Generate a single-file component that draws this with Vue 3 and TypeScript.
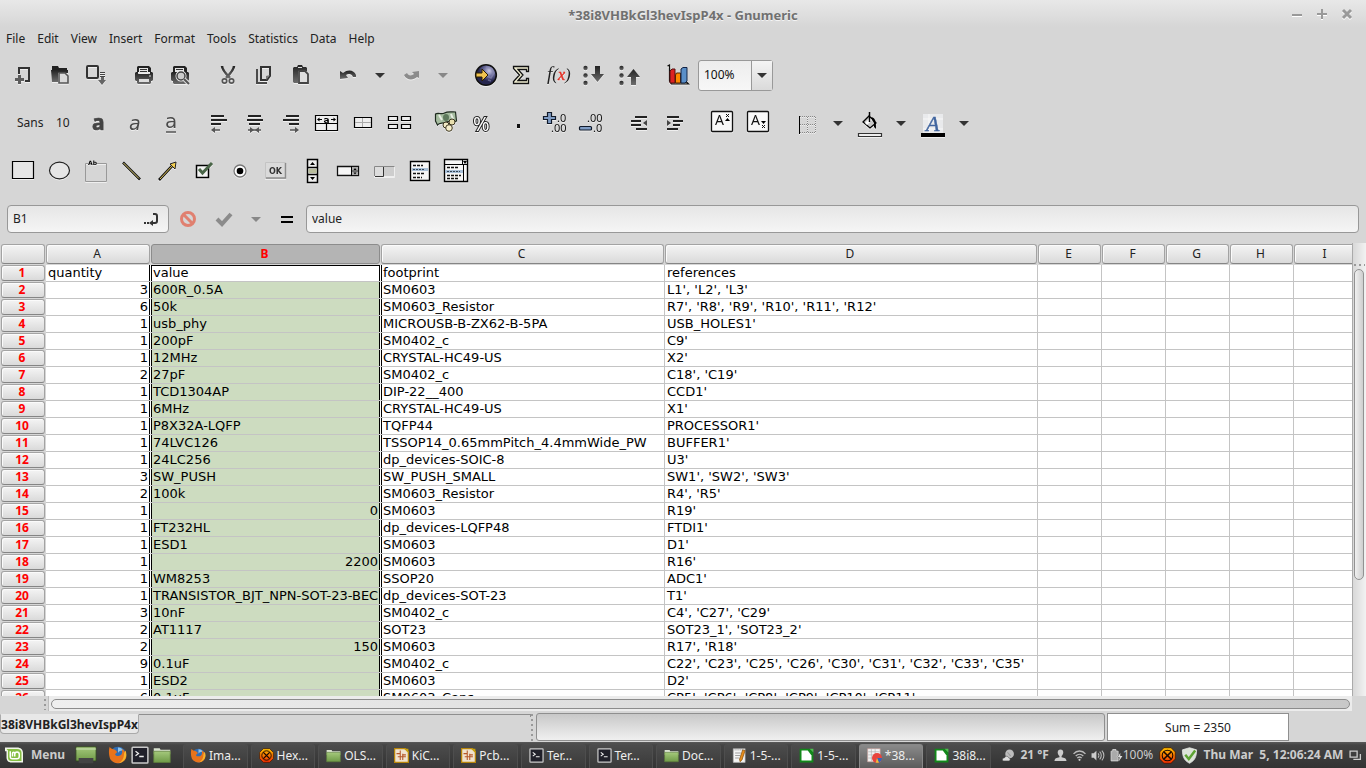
<script setup lang="ts">
import { ref } from 'vue'

interface Tool {
  icon?: string
  label?: string
  kind?: 'sep' | 'arrow'
  faded?: boolean
}
type Row = [string, string, string, string]

const D = 'url(#ink)'
const sep: Tool = { kind: 'sep' }
const arrow = (label: string, faded = false): Tool => ({ kind: 'arrow', label, faded })

const icons: Record<string, string> = {
  new: `<path d="M7 11V5h10v13h-4" fill="none" stroke="#333" stroke-width="2"/><path d="M6 12h3v3h3v3H9v3H6v-3H3v-3h3z" fill="#5c5c5c"/>`,
  open: `<path d="M4 3h6l1 2h8v2H4z" fill="#222"/><path d="M3 7h17v3H10v9H4z" fill="${D}"/><path d="M11 10h6l3 3v7h-9z" fill="#d9d9d9" stroke="#555" stroke-width="1.6"/>`,
  save: `<rect x="3" y="3" width="11" height="12" rx="1" fill="none" stroke="#333" stroke-width="2"/><path d="M16 9.500h5M16 11.500h5M16 13.500h5" stroke="#444"/><path d="M17 14h3v3h2l-4 5-4-5h3z" fill="#666"/>`,
  print: `<path d="M5 9V4l1-1h11l2 2v4z" fill="#222"/><path d="M7 5h9v5H7z" fill="#e4e4e4"/><path d="M8 6.500h7M8 8.500h7" stroke="#333"/><path d="M3 10l1-1h2v2h12V9h2l1 1v7l-1 1h-1v2l-1 1H6l-1-1v-2H4l-1-1z" fill="${D}"/><path d="M7 16h10v3H7z" fill="#ddd"/><path d="M17 13h2" stroke="#ddd"/>`,
  preview: `<path d="M5 9V4l1-1h11l2 2v4z" fill="#222"/><path d="M7 5h9v4H7z" fill="#e4e4e4"/><path d="M8 6.500h7" stroke="#333"/><path d="M3 10l1-1h16l1 1v7l-1 1h-1v2l-1 1H6l-1-1v-2H4l-1-1z" fill="${D}"/><circle cx="13" cy="13" r="4" fill="#ccc" stroke="#eee" stroke-width="3"/><circle cx="13" cy="13" r="4" fill="#ccc" stroke="#444" stroke-width="1.500"/><path d="M16 16l4 4" stroke="#ddd" stroke-width="4"/><path d="M16 16l5 5" stroke="#555" stroke-width="2"/>`,
  cut: `<path d="M6 3c0 4 4 8 8 12M18 3c0 4-4 8-8 12" fill="none" stroke="${D}" stroke-width="2.500"/><circle cx="8.500" cy="18" r="2.200" fill="none" stroke="#555" stroke-width="1.700"/><circle cx="15.500" cy="18" r="2.200" fill="none" stroke="#555" stroke-width="1.700"/>`,
  copy: `<path d="M5 6v14h10" fill="none" stroke="#4a4a4a" stroke-width="2"/><path d="M9 4h9v9l-3 4H9z" fill="none" stroke="#333" stroke-width="2"/><path d="M18 12l-4 5v-4z" fill="#777"/>`,
  paste: `<path d="M5 5l1-1h3l1-2h4l1 2h3l1 1v3h-9v12H6l-1-1z" fill="${D}"/><path d="M11 8h6l3 3v9h-9z" fill="#ddd" stroke="#444" stroke-width="1.800"/><path d="M10 4h4v1h-4z" fill="#ddd"/>`,
  undo: `<path d="M4 16V8l3 2c5-4 11-3 13 2v2h-3c-1-3-4-4-7-2l2 3z" fill="${D}"/>`,
  redo: `<path d="M20 8v7l-2-1c-4 4-11 3-13-2l3-2c1 3 5 3 7 1l-2-2z" fill="#8c8c8c"/>`,
  globe: `<circle cx="12" cy="12" r="10.300" fill="url(#globe)" stroke="#111" stroke-width="1.600"/><path d="M12 4l5 1 3 5-3 5-4-2M14 17l3 1" fill="none" stroke="#8b8bb0" stroke-width="1.500" opacity=".6"/><path d="M2 10h6V6l6 6-6 6v-4H2z" fill="#f0c350" stroke="#2d2000"/>`,
  sum: `<path d="M3.500 3.500h15v5h-2V6.500H8l5 5.500-5 5.500h8.500V15.500h2v5h-15v-2L9.500 12l-6-6.500z" fill="#f4f2d6" stroke="#111" stroke-width="1.300"/>`,
  func: `<text x="1" y="17" font-family="Liberation Serif, serif" font-style="italic" font-size="19" fill="#222">f<tspan font-size="17">(</tspan><tspan fill="#e22d22" stroke="#e22d22" stroke-width=".4" font-size="16">x</tspan><tspan font-size="17">)</tspan></text>`,
  sortasc: `<g fill="${D}"><circle cx="3.500" cy="5" r="2.200"/><circle cx="3.500" cy="12.500" r="2.200"/><circle cx="3.500" cy="20" r="2.200"/><path d="M13 3h5v8h4l-6.500 8L9 11h4z"/></g>`,
  sortdesc: `<g fill="${D}"><circle cx="3.500" cy="5" r="2.200"/><circle cx="3.500" cy="12.500" r="2.200"/><circle cx="3.500" cy="20" r="2.200"/><path d="M13 22h5v-8h4l-6.500-8L9 14h4z"/></g>`,
  chart: `<path d="M1.500 3l2-1v16l2 3h17l-3-3" fill="#bba" stroke="#111" stroke-width="1.200"/><path d="M4 8l2-2h3v14H4z" fill="#d22" stroke="#511"/><path d="M9.500 12l1-2h4v10h-5z" fill="#f80" stroke="#520"/><path d="M15 6l2-1.500h4V18l-2 2h-4z" fill="#5a8fc8" stroke="#124"/>`,
  bold: `<text x="6" y="19" font-family="Noto Sans, sans-serif" font-weight="700" font-size="21" fill="#444" stroke="#444" stroke-width=".7">a</text>`,
  italic: `<text x="7" y="19" font-family="DejaVu Sans, sans-serif" font-style="italic" font-size="19" fill="#4a4a4a">a</text>`,
  under: `<text x="7" y="17" font-family="DejaVu Sans, sans-serif" font-size="20" fill="#4a4a4a">a</text><path d="M8 21h10" stroke="#555" stroke-width="1.500"/>`,
  left: `<path d="M5 5h13M5 9h16M5 13h10" stroke="#222" stroke-width="2"/><path d="M7 19h7" stroke="#555" stroke-width="1.500"/><path d="M5 19l4-3v6z" fill="#555"/>`,
  center: `<path d="M6 5h13M5 9h16M7 13h11" stroke="#222" stroke-width="2"/><path d="M6 19h13" stroke="#555" stroke-width="1.500"/><path d="M12 19l-4-3v6zM13 19l4-3v6z" fill="#555"/>`,
  right: `<path d="M8 5h13M5 9h16M11 13h10" stroke="#222" stroke-width="2"/><path d="M12 19h7" stroke="#555" stroke-width="1.500"/><path d="M21 19l-4-3v6z" fill="#555"/>`,
  merge: `<path d="M1.500 4.500h22v15h-22zM1.500 12.500h22M12.500 12.500v7" fill="#efefef" stroke="#000" stroke-width="1.200"/><text x="9.500" y="11.500" font-family="DejaVu Sans, sans-serif" font-weight="700" font-size="9">a</text><path d="M4 8.500h4M17 8.500h4" stroke="#000"/><path d="M3 8.500l2.500-2v4zM22 8.500l-2.500-2v4z"/>`,
  split: `<path d="M4.500 6.500h17v10h-17z" fill="#eee" stroke="#000" stroke-width="1.200"/><path d="M12.500 7v9M5 11.500h16" stroke="#aaa"/>`,
  cells: `<path d="M2.500 5.500h9v4h-9zM15.500 5.500h9v4h-9zM2.500 13.500h9v4h-9zM15.500 13.500h9v4h-9z" fill="#eee" stroke="#000" stroke-width="1.200"/>`,
  money: `<path d="M1.500 3c3-2 6 1 9-1s8-1 11-1l1 9c-3 2-6-1-10 1s-7 0-9 3l-2-4z" fill="#a6bda0" stroke="#1f2b1f" stroke-width="1.200"/><path d="M5 4l3 5M17 3l2 5" stroke="#e8eee4" stroke-width="2"/><ellipse cx="12" cy="6.500" rx="3" ry="3.500" fill="#5f7a5d"/><circle cx="18" cy="11" r="3" fill="#e8dfae" stroke="#3b3520"/><circle cx="12" cy="14" r="3" fill="#f2ebc6" stroke="#3b3520"/><circle cx="15" cy="17" r="3.300" fill="#f6eecb" stroke="#3b3520"/>`,
  percent: `<text x="3" y="20" font-family="Noto Sans, sans-serif" font-size="20" fill="#fff" stroke="#222" stroke-width="2" paint-order="stroke">%</text>`,
  dot: `<path d="M11 13h3v4h-3z" fill="#111"/>`,
  decmore: `<path d="M5.500 1.500h4v4h4v3h-4v4h-4v-4h-4v-3h4z" fill="#7f9cc4" stroke="#111a2a" stroke-width="1.200"/><text font-family="Noto Sans, sans-serif" font-size="11" fill="#111"><tspan x="15" y="11">.0</tspan><tspan x="9" y="21">.00</tspan></text>`,
  decless: `<rect x="1.500" y="15.500" width="12" height="3.500" rx="1" fill="#7f9cc4" stroke="#111a2a" stroke-width="1.200"/><text font-family="Noto Sans, sans-serif" font-size="11" fill="#111"><tspan x="9" y="11">.00</tspan><tspan x="15" y="21">.0</tspan></text>`,
  outdent: `<path d="M9 6h12M5 10h10M5 14h10M10 18h11" stroke="#222" stroke-width="2"/><path d="M17 12l4-3v6z" fill="#444"/>`,
  indent: `<path d="M5 6h12M11 10h10M11 14h7M5 18h11" stroke="#222" stroke-width="2"/><path d="M9 12L5 9v6z" fill="#444"/>`,
  sup: `<rect x="1.500" y=".500" width="21" height="20" rx="1" fill="#f8f8f8" stroke="#111" stroke-width="1.300"/><text x="5" y="14" font-family="Noto Sans, sans-serif" font-size="14" fill="#111">A</text><path d="M16 3l3 3m0-3l-3 3" stroke="#111"/><path d="M17.500 7l2.500 3h-5z"/>`,
  sub: `<rect x="1.500" y=".500" width="21" height="20" rx="1" fill="#f8f8f8" stroke="#111" stroke-width="1.300"/><text x="5" y="14" font-family="Noto Sans, sans-serif" font-size="14" fill="#111">A</text><path d="M16 14l3 3m0-3l-3 3" stroke="#111"/><path d="M17.500 13l2.500-3h-5z"/>`,
  borders: `<path d="M6 5.500h16M6 13.500h16M6 21.500h16M13.500 6v16M21.500 6v16" stroke="#888" stroke-dasharray="1 1"/><path d="M5.500 5v18" stroke="#000"/>`,
  fill: `<path d="M6 11l6-6 7 7-6 5z" fill="#c9c9c9" stroke="#000" stroke-width="1.300"/><path d="M8 12l5-5 2 2-5 5z" fill="#fff"/><path d="M12.500 1v10" stroke="#000" stroke-width="1.500"/><path d="M14 6c5 1 5 5 5 12l-2-2V12z"/><path d="M1.500 22.500h23v3h-23z" fill="#eee" stroke="#333" stroke-width="1.200"/>`,
  fontcolor: `<path d="M3 3h20v19H3z" fill="#e9eaec"/><path d="M3 8h20M3 18h20M9 3v19" stroke="#f8f8f8"/><text x="6" y="20" font-family="Liberation Serif, serif" font-style="italic" font-size="22" fill="#41659f" stroke="#41659f" stroke-width=".4">A</text><path d="M1 22h24v4H1z" fill="#000"/>`,
  rect: `<path d="M.500 2.500h21v17H.500z" fill="#e6e6e6" stroke="#000" stroke-width="1.200"/>`,
  oval: `<ellipse cx="11.500" cy="11.500" rx="10" ry="8.300" fill="#e6e6e6" stroke="#222" stroke-width="1.200"/>`,
  frame: `<path d="M4 4.500H1.500v18h21v-18H13" fill="none" stroke="#999"/><text x="4" y="6" font-family="DejaVu Sans, sans-serif" font-weight="700" font-size="6">Ab</text>`,
  line: `<path d="M3 3.500l17 17" stroke="#111" stroke-width="2.600"/><path d="M3.500 4L19 19.500" stroke="#e6d67a"/>`,
  arrowline: `<path d="M3 21L17 6" stroke="#111" stroke-width="2.600"/><path d="M4 20L17 6" stroke="#e6c95a"/><path d="M14 5l6-2-1 7z" fill="#f3cf52" stroke="#222"/>`,
  check: `<path d="M4.500 6.500h12v12h-12z" fill="#f4f4f4" stroke="#000" stroke-width="1.500"/><path d="M7 10l3.500 4L20 4" fill="none" stroke="#4a6648" stroke-width="3"/>`,
  radio: `<circle cx="12" cy="12" r="6" fill="#fff" stroke="#777" stroke-width="1.300"/><circle cx="12" cy="12" r="3.300" fill="#000"/>`,
  ok: `<path d="M1.500 3.500h20v16h-20z" fill="#dadada" stroke="#c4c4c4"/><path d="M2 19h19.500V4" fill="none" stroke="#8d8d8d" stroke-width="1.500"/><text x="5" y="15" font-family="DejaVu Sans, sans-serif" font-weight="700" font-size="8" fill="#333">OK</text>`,
  scroll: `<path d="M7.500.500h10v23h-10zM7.500 8.500h10M7.500 15.500h10" fill="#eee" stroke="#000" stroke-width="1.500"/><path d="M8.500 10h8v4h-8z" fill="#b9bd9c"/><path d="M12.500 3l2.500 3h-5zM12.500 21l2.500-3h-5z"/>`,
  spin: `<path d="M1.500 7.500h21v9h-21z" fill="#f6f6f6" stroke="#111" stroke-width="1.300"/><path d="M15 8h7v8h-7z" fill="#aaa"/><path d="M15.500 7v10" stroke="#000"/><path d="M16 12h6" stroke="#333"/><path d="M19 9l1.500 2h-3zM19 15.500l1.500-2h-3z"/>`,
  slider: `<path d="M2.500 7.500h20v10h-20z" fill="#cdcdcd" stroke="#eee"/><path d="M2.500 17V7.500h20" fill="none" stroke="#888"/><path d="M3 8h8v9H3z" fill="#ddd"/><path d="M11.500 8v9.500H3" fill="none" stroke="#333"/>`,
  list: `<path d="M2.500 2.500h19v19h-19z" fill="#f6f6f6" stroke="#000" stroke-width="1.400"/><path d="M5 6.500h10M5 14.500h12M5 18.500h9" stroke="#111" stroke-width="1.500" stroke-dasharray="3 1"/><path d="M4 9h16v3H4z" fill="#a9c0d8"/><path d="M5 10.500h12" stroke="#345" stroke-dasharray="2 1"/>`,
  combo: `<path d="M.500.500h23v22H.500z" fill="#f6f6f6" stroke="#000" stroke-width="1.400"/><path d="M1 5.500h22M18.500 1v5M19.500 6v17" stroke="#000"/><path d="M19 2h4l-2 3z"/><path d="M3 8.500h11M3 16.500h14M3 19.500h12" stroke="#111" stroke-width="1.500" stroke-dasharray="3 1"/><path d="M1 11h18v3H1z" fill="#a9c0d8"/><path d="M3 12.500h13" stroke="#345" stroke-dasharray="2 1"/>`,
  fox: `<circle cx="12" cy="12" r="11" fill="#2f6db5"/><path d="M12 2c4 0 6 2 7 4-5 0-7 2-7 4z" fill="#8fc4ea"/><path d="M1 1c1 3 4 3 7 4l3 3-3 3c1 3 5 3 8 1 2-2 2-5 1-8 6 3 8 10 4 15-5 6-15 5-19-1C0 14-1 6 1 1z" fill="#e8731b"/><path d="M22 6c3 7 0 15-9 17 5-3 7-7 7-13z" fill="#f7b52c"/>`,
  term: `<rect x="1.500" y="1.500" width="21" height="21" rx="1" fill="#20202a" stroke="#c9c9c9" stroke-width="2"/><path d="M6 7l4 3-4 3M11 14h6" fill="none" stroke="#eee" stroke-width="1.700"/>`,
  folder: `<path d="M1 3h8l1 2h13v6H1z" fill="#d9e2cf"/><path d="M1 7h22v15H1z" fill="url(#green)" stroke="#5d7d3c"/>`,
  hex: `<path d="M7 1h10l6 6v10l-6 6H7l-6-6V7z" fill="url(#fire)" stroke="#3a1200"/><circle cx="12" cy="12" r="7.500" fill="none" stroke="#1a0800" stroke-width="1.500"/><path d="M7 7l10 10M17 7L7 17" stroke="#1a0800" stroke-width="2.200"/>`,
  kicad: `<path d="M1 1h17l5 5v17H1z" fill="#f0e3cf" stroke="#b8860b" stroke-width="2"/><path d="M16 1h7v7z" fill="#c9a20c"/><path d="M4 9h6V4M10 9v10M6 14h13M14 9v10M14 11h5" fill="none" stroke="#b5572a" stroke-width="1.700"/>`,
  text: `<path d="M2 1h19v22H2z" fill="#f4f4f4" stroke="#aaa"/><path d="M4 3h15" stroke="#777" stroke-dasharray="2 1"/><path d="M5 8h9M5 12h8M5 16h6" stroke="#999" stroke-width="1.500"/><path d="M17 3l4 1-5 15-3 3-1-4z" fill="#e88d1c" stroke="#734200"/>`,
  calc: `<path d="M1 1h16l6 6v16H1z" fill="#12881a"/><path d="M4 4h10l6 8v8H4z" fill="#fff"/><path d="M17 1h6v6z" fill="#4cc24e"/>`,
  gnum: `<path d="M1 1h20v21H1z" fill="#f2f2f2" stroke="#c9a09c"/><path d="M2 6h18M2 11h18M2 16h18M7 2v19M13 2v19" stroke="#aaa"/><circle cx="16" cy="16" r="8" fill="#e8453e"/><path d="M16 16h8a8 8 0 0 1-5 7z" fill="#3565b5"/><path d="M16 16l3 7a8 8 0 0 1-5 0z" fill="#e5c13d"/>`,
  mint: `<path d="M0 2h16c5 0 8 3 8 7v13H9c-5 0-7-3-7-7V7H0z" fill="#f2f7ea"/><path d="M2 4h14c4 0 6 2 6 5v11H9c-4 0-5-2-5-5V6z" fill="#86be43"/><path d="M7 7v7c0 3 1 3 3 3h6c2 0 3-1 3-3v-3c0-4-6-4-6 0v3m0-3c0-4-3-3-3-1v4" fill="none" stroke="#fff" stroke-width="2"/>`,
  desk: `<path d="M1 1h22v19H1z" fill="url(#green)" stroke="#314420"/><path d="M1 4h22" stroke="#d5e4c4"/><path d="M4 16h16v7H4z" fill="#444"/>`,
  weather: `<circle cx="14" cy="9" r="8" fill="#bdbdbd"/><path d="M10 6l6 7" stroke="#999" stroke-width="2"/><path d="M2 22c-3-4 1-6 3-6 1-4 7-3 7 0 4 0 4 5 1 6z" fill="#ddd" stroke="#444"/>`,
  person: `<path d="M12 1c7 0 6 9 2 12v2c5 1 9 2 9 7H1c0-5 4-6 9-7v-2C6 10 5 1 12 1z" fill="#ccc"/>`,
  wifi: `<path d="M1 9c6-7 16-7 22 0M5 13c4-4 10-4 14 0M8 17c2-3 6-3 8 0" fill="none" stroke="#bbb" stroke-width="2.500"/><circle cx="12" cy="20" r="2" fill="#ccc"/>`,
  sound: `<path d="M1 8h4l5-5v18l-5-5H1z" fill="#ccc"/><path d="M13 8c2 2 2 6 0 8M16 5c4 4 4 10 0 14M20 3c5 5 5 13 0 18" fill="none" stroke="#bbb" stroke-width="2"/>`,
  battery: `<path d="M2 4h3V1h6v3h4v7l-2 3 2 2v6H2z" fill="#aaa" stroke="#ddd" stroke-width="1.500"/><path d="M19 7l-5 8h4l-2 8 7-10h-4z" fill="#ddd"/>`,
  shield: `<path d="M12 1l10 3c0 9-2 15-10 19C4 19 2 13 2 4z" fill="#dce3d8" stroke="#eee"/><path d="M6 11l5 6 9-12" fill="none" stroke="#5da332" stroke-width="3.500"/>`,
  wins: `<path d="M2 4h13v11H2zM8 19h13V9" fill="none" stroke="#ccc" stroke-width="2.400"/>`,
}

const t = (icon: string, label: string, faded = false): Tool => ({ icon, label, faded })
const standard: Tool[] = [
  t('new', 'New'), t('open', 'Open'), t('save', 'Save'), sep, t('print', 'Print'), t('preview', 'Print Preview'), sep,
  t('cut', 'Cut'), t('copy', 'Copy'), t('paste', 'Paste'), sep, t('undo', 'Undo'), arrow('Undo list'),
  t('redo', 'Redo'), arrow('Redo list', true), sep, t('globe', 'Hyperlink'), t('sum', 'Sum'), t('func', 'Function'),
  t('sortasc', 'Sort Ascending'), t('sortdesc', 'Sort Descending'), sep, t('chart', 'Chart'),
]
const format: Tool[] = [
  t('bold', 'Bold'), t('italic', 'Italic'), t('under', 'Underline'), sep, t('left', 'Align Left'), t('center', 'Center'),
  t('right', 'Align Right'), t('merge', 'Center Across'), t('split', 'Merge'), t('cells', 'Split'), sep, t('money', 'Money'),
  t('percent', 'Percentage'), t('dot', 'Thousands'), t('decmore', 'More Decimals'), t('decless', 'Fewer Decimals'), sep,
  t('outdent', 'Decrease Indent'), t('indent', 'Increase Indent'), sep, t('sup', 'Superscript'), t('sub', 'Subscript'), sep,
  t('borders', 'Borders'), arrow('Border list'), t('fill', 'Background'), arrow('Background list'),
  t('fontcolor', 'Foreground'), arrow('Foreground list'),
]
const objects: Tool[] = [
  t('rect', 'Rectangle'), t('oval', 'Ellipse'), t('frame', 'Frame'), t('line', 'Line'), t('arrowline', 'Arrow'),
  t('check', 'Checkbox'), t('radio', 'Radio Button'), t('ok', 'Button'), t('scroll', 'Scrollbar'), t('spin', 'Spin Button'),
  t('slider', 'Slider'), t('list', 'List'), t('combo', 'Combo Box'),
]
const menus = ['File', 'Edit', 'View', 'Insert', 'Format', 'Tools', 'Statistics', 'Data', 'Help']
const cols = ['A', 'B', 'C', 'D', 'E', 'F', 'G', 'H', 'I']

const rows: Row[] = [
  ['quantity', 'value', 'footprint', 'references'],
  ['3', '600R_0.5A', 'SM0603', "L1', 'L2', 'L3'"],
  ['6', '50k', 'SM0603_Resistor', "R7', 'R8', 'R9', 'R10', 'R11', 'R12'"],
  ['1', 'usb_phy', 'MICROUSB-B-ZX62-B-5PA', "USB_HOLES1'"],
  ['1', '200pF', 'SM0402_c', "C9'"],
  ['1', '12MHz', 'CRYSTAL-HC49-US', "X2'"],
  ['2', '27pF', 'SM0402_c', "C18', 'C19'"],
  ['1', 'TCD1304AP', 'DIP-22__400', "CCD1'"],
  ['1', '6MHz', 'CRYSTAL-HC49-US', "X1'"],
  ['1', 'P8X32A-LQFP', 'TQFP44', "PROCESSOR1'"],
  ['1', '74LVC126', 'TSSOP14_0.65mmPitch_4.4mmWide_PW', "BUFFER1'"],
  ['1', '24LC256', 'dp_devices-SOIC-8', "U3'"],
  ['3', 'SW_PUSH', 'SW_PUSH_SMALL', "SW1', 'SW2', 'SW3'"],
  ['2', '100k', 'SM0603_Resistor', "R4', 'R5'"],
  ['1', '0', 'SM0603', "R19'"],
  ['1', 'FT232HL', 'dp_devices-LQFP48', "FTDI1'"],
  ['1', 'ESD1', 'SM0603', "D1'"],
  ['1', '2200', 'SM0603', "R16'"],
  ['1', 'WM8253', 'SSOP20', "ADC1'"],
  ['1', 'TRANSISTOR_BJT_NPN-SOT-23-BEC', 'dp_devices-SOT-23', "T1'"],
  ['3', '10nF', 'SM0402_c', "C4', 'C27', 'C29'"],
  ['2', 'AT1117', 'SOT23', "SOT23_1', 'SOT23_2'"],
  ['2', '150', 'SM0603', "R17', 'R18'"],
  ['9', '0.1uF', 'SM0402_c', "C22', 'C23', 'C25', 'C26', 'C30', 'C31', 'C32', 'C33', 'C35'"],
  ['1', 'ESD2', 'SM0603', "D2'"],
  ['6', '0.1uF', 'SM0603_Caps', "CP5', 'CP6', 'CP8', 'CP9', 'CP10', 'CP11'"],
]
const isNumber = (v: string) => /^\d+$/.test(v)

const tasks = [
  ['fox', 'Ima...'], ['hex', 'Hex...'], ['folder', 'OLS...'], ['kicad', 'KiC...'], ['kicad', 'Pcb...'], ['term', 'Ter...'],
  ['term', 'Ter...'], ['folder', 'Doc...'], ['text', '1-5-...'], ['calc', '1-5-...'], ['gnum', '*38...'], ['calc', '38i8...'],
]
const bars = [
  { name: 'Standard', tools: standard },
  { name: 'Format', tools: format },
  { name: 'Object', tools: objects },
]
const zoomLevel = ref('100%')
const cellRef = ref('B1')
const formula = ref('value')
</script>

<template>
  <div class="desktop">
    <svg class="defs" aria-hidden="true">
      <defs>
        <linearGradient id="ink" x1="0" y1="0" x2="0" y2="1"><stop offset="0" stop-color="#222" /><stop offset="1" stop-color="#6d6d6d" /></linearGradient>
        <linearGradient id="green" x1="0" y1="0" x2="0" y2="1"><stop offset="0" stop-color="#a5c97c" /><stop offset="1" stop-color="#6f9a47" /></linearGradient>
        <linearGradient id="fire" x1="0" y1="0" x2="0" y2="1"><stop offset="0" stop-color="#ffc400" /><stop offset="1" stop-color="#f02a00" /></linearGradient>
        <radialGradient id="globe" cx=".65" cy=".3"><stop offset="0" stop-color="#c9c9e2" /><stop offset=".5" stop-color="#6f70a0" /><stop offset="1" stop-color="#26264e" /></radialGradient>
      </defs>
    </svg>

    <header class="titlebar">
      <h1>*38i8VHBkGl3hevIspP4x - Gnumeric</h1>
      <div class="winbtns">
        <button aria-label="Minimize"><svg viewBox="0 0 10 10"><path d="M0 6h10" /></svg></button>
        <button aria-label="Maximize"><svg viewBox="0 0 10 10"><path d="M0 5h10M5 0v10" /></svg></button>
        <button aria-label="Close"><svg viewBox="0 0 10 10"><path class="x" d="M1 1l8 8M9 1l-8 8" /></svg></button>
      </div>
    </header>

    <nav class="menubar"><button v-for="m in menus" :key="m">{{ m }}</button></nav>

    <div v-for="bar in bars" :key="bar.name" class="toolbar" role="toolbar" :aria-label="bar.name">
      <template v-if="bar.name === 'Format'">
        <button class="fontname">Sans</button>
        <button class="fontsize">10</button>
      </template>
      <template v-for="(tool, i) in bar.tools" :key="i">
        <span v-if="tool.kind === 'sep'" class="sep"></span>
        <button v-else-if="tool.kind === 'arrow'" class="drop" :class="{ faded: tool.faded }" :aria-label="tool.label"><i class="tri"></i></button>
        <button v-else class="tool" :aria-label="tool.label"><svg viewBox="0 0 24 24" v-html="icons[tool.icon!]"></svg></button>
      </template>
      <div v-if="bar.name === 'Standard'" class="zoom">
        <input v-model="zoomLevel" aria-label="Zoom" />
        <button aria-label="Zoom levels"><i class="tri"></i></button>
      </div>
    </div>

    <div class="entry">
      <div class="field namebox">
        <input v-model="cellRef" aria-label="Cell reference" />
        <svg viewBox="0 0 14 13"><path d="M0 10h2M3 10h2M9 1h2c1 0 2 1 2 2v5c0 1-1 2-2 2H8" fill="none" stroke="#333" stroke-width="2" /><path d="M5 10l4-3v6z" fill="#333" /></svg>
      </div>
      <button class="cancel" aria-label="Cancel"><svg viewBox="0 0 16 16"><circle cx="8" cy="8" r="6.500" /><path d="M3.500 3.500l9 9" /></svg></button>
      <button class="accept" aria-label="Accept"><svg viewBox="0 0 18 14"><path d="M2 7l5 5L16 2" /></svg></button>
      <button class="drop faded" aria-label="Accept options"><i class="tri"></i></button>
      <button class="equals" aria-label="Enter formula"><svg viewBox="0 0 12 8"><path d="M0 2h12M0 7h12" stroke="#000" stroke-width="2" /></svg></button>
      <div class="field formula"><input v-model="formula" aria-label="Formula" /></div>
    </div>

    <main class="sheet">
      <div class="grid">
        <table>
          <colgroup>
            <col class="ch" /><col class="ca" /><col class="cb" /><col class="cc" /><col class="cd" />
            <col v-for="n in 5" :key="n" class="ce" />
          </colgroup>
          <thead>
            <tr>
              <th class="rowhead"><span class="cap"></span></th>
              <th v-for="c in cols" :key="c" scope="col"><span class="cap" :class="{ picked: c === 'B' }">{{ c }}</span></th>
            </tr>
          </thead>
          <tbody>
            <tr v-for="(row, r) in rows" :key="r">
              <th scope="row" class="rowhead"><span class="cap">{{ r + 1 }}</span></th>
              <td v-for="(cell, c) in row" :key="c" :class="['col' + cols[c], { num: isNumber(cell) }]">{{ cell }}</td>
              <td v-for="n in 5" :key="'e' + n"></td>
            </tr>
          </tbody>
        </table>
      </div>
      <div class="vscroll"><i class="grip"></i><div class="vthumb"></div></div>
    </main>
    <div class="hrow">
      <i class="grip tall"></i>
      <div class="hscroll"><div class="hthumb"></div></div>
    </div>

    <footer class="status">
      <div class="tabs"><button class="tab">38i8VHBkGl3hevIspP4x</button><span class="rule"></span></div>
      <i class="grip tall"></i>
      <div class="progress"></div>
      <div class="sum">Sum = 2350</div>
    </footer>

    <div class="taskbar">
      <button class="start"><svg viewBox="0 0 24 24" v-html="icons.mint"></svg>Menu</button>
      <div class="launch">
        <button class="showdesk" aria-label="Show desktop"><svg viewBox="0 0 24 24" preserveAspectRatio="none" v-html="icons.desk"></svg></button>
        <button aria-label="Firefox"><svg viewBox="0 0 24 24" v-html="icons.fox"></svg></button>
        <button aria-label="Terminal"><svg viewBox="0 0 24 24" v-html="icons.term"></svg></button>
        <button aria-label="Files"><svg viewBox="0 0 24 24" v-html="icons.folder"></svg></button>
      </div>
      <div class="tasks">
        <button v-for="(task, i) in tasks" :key="i" :class="{ current: task[0] === 'gnum' }">
          <svg viewBox="0 0 24 24" v-html="icons[task[0]]"></svg><span>{{ task[1] }}</span>
        </button>
      </div>
      <div class="tray">
        <svg viewBox="0 0 24 24" v-html="icons.weather"></svg><b>21 °F</b>
        <svg viewBox="0 0 24 24" v-html="icons.person"></svg>
        <svg viewBox="0 0 24 24" v-html="icons.wifi"></svg>
        <svg viewBox="0 0 24 24" v-html="icons.sound"></svg>
        <span class="power"><svg viewBox="0 0 24 24" v-html="icons.battery"></svg>100%</span>
        <svg class="big" viewBox="0 0 24 24" v-html="icons.hex"></svg>
        <svg class="big" viewBox="0 0 24 24" v-html="icons.shield"></svg>
        <b class="clock">Thu Mar&nbsp; 5, 12:06:24 AM</b>
        <svg viewBox="0 0 24 24" v-html="icons.wins"></svg>
      </div>
    </div>
  </div>
</template>

<style>
body { overflow: hidden; background: #d6d6d6; }
</style>

<style scoped>
.desktop { display: flex; flex-direction: column; height: 100vh; background: #d6d6d6; font: 12px/16px "Noto Sans", sans-serif; color: #222; cursor: default; }
.desktop * { box-sizing: border-box; }
.defs { position: absolute; width: 0; height: 0; }
button { border: 0; padding: 0; margin: 0; background: none; font: inherit; color: inherit; }
input { border: 0; padding: 0; margin: 0; min-width: 0; background: none; font: inherit; color: inherit; outline: 0; }
svg { display: block; overflow: visible; flex: none; }

.titlebar { display: grid; grid-template-columns: 1fr auto 1fr; align-items: center; height: 27px; background: linear-gradient(#e8e8e8, #d6d6d6); }
.titlebar h1 { grid-column: 2; margin: 0; padding-top: 3px; font-size: 13px; line-height: 18px; font-weight: 700; color: #707070; text-shadow: 0 1px 0 #f4f4f4; }
.winbtns { display: flex; justify-content: flex-end; gap: 15px; padding-right: 14px; }
.winbtns svg { width: 10px; height: 10px; stroke: #999; stroke-width: 2; filter: drop-shadow(0 1px 0 #fff); }
.winbtns .x { stroke-width: 3; }

.menubar { display: flex; gap: 12px; height: 24px; padding-left: 6px; align-items: center; }

.toolbar { display: flex; align-items: center; height: 48px; padding-left: 6px; }
.tool { display: grid; place-items: center; width: 36px; height: 36px; }
.tool svg { width: 24px; height: 24px; filter: drop-shadow(0 1px 0 rgba(255, 255, 255, 0.6)); }
.sep { width: 12px; height: 22px; }
.drop { display: grid; place-items: center; width: 27px; height: 36px; }
.tri { display: block; width: 0; height: 0; border: 5px solid transparent; border-top-color: #333; border-bottom: 0; }
.faded .tri { border-top-color: #888; }
.fontname { width: 39px; padding-left: 11px; text-align: left; }
.fontsize { width: 35px; padding-left: 11px; text-align: left; }
.zoom { display: flex; height: 31px; width: 75px; margin-left: 2px; border: 1px solid #999; border-radius: 3px; background: linear-gradient(#ededed, #f7f7f7); }
.zoom input { flex: 1; padding-left: 5px; color: #111; }
.zoom button { display: grid; place-items: center; width: 21px; border-left: 1px solid #999; background: linear-gradient(#f4f4f4, #dadada); }

.entry { display: flex; align-items: center; height: 48px; padding: 0 7px; }
.field { display: flex; align-items: center; height: 28px; border: 1px solid #989898; border-radius: 4px; background: linear-gradient(#e6e6e6, #f5f5f5); padding: 0 5px; }
.field input { flex: 1; width: 100%; }
.namebox { width: 162px; padding-right: 10px; }
.namebox svg { width: 14px; height: 13px; }
.formula { flex: 1; }
.cancel { margin-left: 11px; }
.cancel svg { width: 16px; height: 16px; fill: none; stroke: #e08070; stroke-width: 3; }
.accept { margin-left: 19px; }
.accept svg { width: 18px; height: 14px; fill: none; stroke: #8b8b8b; stroke-width: 4; }
.entry .drop { margin-left: 9px; }
.equals { margin: 0 13px 0 12px; }
.equals svg { width: 12px; height: 8px; }

.sheet { flex: 1; min-height: 0; display: flex; }
.grid { flex: 1; min-width: 0; overflow: hidden; }
table { table-layout: fixed; width: 1358px; border-collapse: separate; border-spacing: 0; }
.ch { width: 46px; }
.ca { width: 105px; }
.cb { width: 230px; }
.cc { width: 284px; }
.cd { width: 373px; }
.ce { width: 64px; }
th, td { padding: 0; height: 17px; }
th { font-weight: 400; padding: 0 1px 1px 0; }
.rowhead { padding-left: 1px; }
thead th { height: 22px; padding-top: 1px; }
.cap { display: block; height: 16px; padding-right: 2px; border: 1px solid #a3a3a3; border-bottom-color: #858585; border-radius: 3px; background: linear-gradient(#f4f4f4, #dadada); box-shadow: inset 1px 1px 0 #fbfbfb; line-height: 14px; text-align: center; }
thead .cap { height: 20px; line-height: 18px; }
tbody .cap { color: #f00; font-weight: 700; }
.cap.picked { background: #b4b4b4; border-color: #8c8c8c; box-shadow: none; color: #f00; font-weight: 700; }
td { height: 17px; padding: 0 2px; border-right: 1px solid #c4c4c4; border-bottom: 1px solid #c4c4c4; background: #fff; font: 13px/16px "DejaVu Sans", sans-serif; color: #000; white-space: nowrap; overflow: hidden; }
.num { text-align: right; }
.colA { border-right-color: #fff; box-shadow: inset -1px 0 0 #000; }
.colB { background: #cddcc0; border-right-color: #fff; box-shadow: inset 1px 0 0 #000, inset -1px 0 0 #000; }
.colC { box-shadow: inset 1px 0 0 #000; }
tr:first-child .colB { background: #fff; box-shadow: inset 1px 1px 0 #000, inset -1px 0 0 #000; }
.vscroll { width: 14px; border-left: 1px solid #aaa; padding: 21px 1px 0; background: linear-gradient(90deg, #d8d8d8, #f2f2f2); display: flex; flex-direction: column; gap: 3px; }
.vthumb { height: 72%; max-height: 312px; border: 1px solid #929292; border-radius: 5px; background: linear-gradient(90deg, #f0f0f0, #cecece); width: 10px; }
.grip { display: block; height: 2px; background: repeating-linear-gradient(90deg, #999 0 2px, transparent 2px 5px); }
.grip.tall { width: 2px; height: auto; align-self: stretch; margin: 3px 2px 1px 0; background: repeating-linear-gradient(#999 0 2px, transparent 2px 5px); }
.hrow { display: flex; height: 15px; padding: 0 14px 0 44px; }
.hscroll { flex: 1; padding: 3px 2px 0; border-left: 1px solid #bbb; background: #ececec; }
.hthumb { height: 10px; border: 1px solid #8c8c8c; border-radius: 5px; background: linear-gradient(90deg, #efefef, #c8c8c8); }

.status { display: flex; height: 31px; }
.tabs { display: flex; align-items: flex-start; flex: 0 1 531px; padding-top: 3px; }
.tab { flex: none; height: 20px; width: 139px; line-height: 20px; font-weight: 700; background: #e8e8e8; border: 1px solid #aaa; border-top-color: #e8e8e8; border-radius: 0 0 4px 4px; white-space: nowrap; display: flex; justify-content: center; }
.rule { flex: 1; height: 3px; border: solid #8f8f8f; border-width: 1px 1px 0 0; }
.progress { flex: 1; margin: 2px 1px 1px; border: 1px solid #8f8f8f; border-radius: 3px; background: linear-gradient(#c8c8c8, #f0f0f0); }
.sum { flex: 0 1 182px; margin: 2px 77px 1px 1px; border: 1px solid #8f8f8f; background: #fff; line-height: 27px; text-align: center; }

.taskbar { display: flex; align-items: center; height: 26px; background: linear-gradient(#5a5a5a, #444 3px, #333); color: #eee; }
.start { display: flex; align-items: center; gap: 7px; padding-left: 4px; width: 75px; font-weight: 700; color: #ccc; }
.start svg { width: 20px; height: 18px; }
.launch { display: flex; align-items: center; gap: 4px; width: 108px; flex: none; }
.launch svg { width: 18px; height: 18px; }
.launch .showdesk { margin-right: 8px; }
.launch .showdesk svg { width: 22px; height: 18px; }
.tasks { flex: 0 1 808px; min-width: 0; display: grid; grid-template-columns: repeat(12, 1fr); gap: 3px; align-self: stretch; padding-top: 2px; }
.tasks button { min-width: 0; display: flex; align-items: center; gap: 3px; padding: 0 0 2px 7px; border: 1px solid #4e4e4e; border-bottom: 0; border-radius: 3px 3px 0 0; background: linear-gradient(#4c4c4c, #3a3a3a); white-space: nowrap; overflow: hidden; }
.tasks svg { width: 15px; height: 15px; }
.tasks .current { background: linear-gradient(#8a8a8a, #5c5c5c); border-color: #888; }
.tray { flex: 1; display: flex; align-items: center; justify-content: space-between; padding: 0 4px 0 11px; color: #ccc; white-space: nowrap; }
.tray svg { width: 13px; height: 13px; }
.tray .big { width: 17px; height: 17px; }
</style>
<style scoped>
.power { display: flex; align-items: center; }
</style>
